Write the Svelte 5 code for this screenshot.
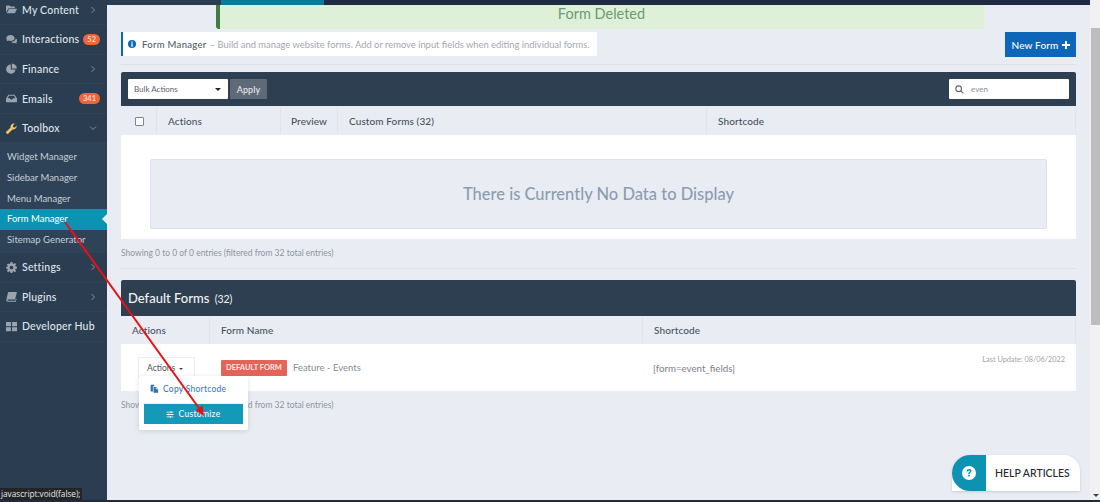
<script lang="ts">
  const topItems = [
    { label: 'My Content', icon: 'folder', arrow: 'right' },
    { label: 'Interactions', icon: 'comments', badge: '52' },
    { label: 'Finance', icon: 'pie', arrow: 'right' },
    { label: 'Emails', icon: 'inbox', badge: '341' },
    { label: 'Toolbox', icon: 'wrench', arrow: 'down' }
  ]
  const subItems = ['Widget Manager', 'Sidebar Manager', 'Menu Manager', 'Form Manager', 'Sitemap Generator']
  const bottomItems = [
    { label: 'Settings', icon: 'cog', arrow: 'right' },
    { label: 'Plugins', icon: 'book', arrow: 'right' },
    { label: 'Developer Hub', icon: 'grid' }
  ]
</script>

{#snippet navIcon(name)}
  <svg class="nav-icon" class:yellow={name === 'wrench'} viewBox="0 0 16 16" aria-hidden="true">
    {#if name === 'folder'}
      <path d="M0 3.5C0 2.7.6 2 1.4 2h3.8l1.5 1.6h5c.8 0 1.3.6 1.3 1.3V6H4L0 12z" />
      <path d="M4.5 7H16l-3 6.5H1z" />
    {:else if name === 'comments'}
      <path d="M6.5 1.5C3 1.5.4 3.5.4 6c0 1.100.5 2 1.300 2.800-.3.8-.9 1.500-1.200 1.900 1.200-.1 2.300-.6 3-1.100.9.300 1.900.5 3 .5 3.400 0 6-2 6-4.100s-2.600-4.500-6-4.500z" />
      <path d="M14 6.500c.1 2.900-2.800 5-6.500 5.100.9 1 2.500 1.600 4.200 1.600.6 0 1.200-.1 1.700-.2.700.5 1.600.8 2.400.9-.3-.4-.7-1-.9-1.600 1-.8 1.500-1.700 1.500-2.800 0-1.200-1-2.300-2.400-3z" />
    {:else if name === 'pie'}
      <path d="M7 2.200a6.800 6.800 0 1 0 6.800 7.400H7z" />
      <path d="M8.500 .8v7.300h7.300A7.400 7.400 0 0 0 8.500 .8z" />
    {:else if name === 'inbox'}
      <path fill-rule="evenodd" d="M3.500 2.500h9L16 8v4.200c0 .8-.6 1.300-1.300 1.300H1.300C.6 13.500 0 13 0 12.200V8zM4.500 4 2.300 7.600h3.500l1 1.800h2.400l1-1.800h3.500L11.500 4z" />
    {:else if name === 'wrench'}
      <path d="M15.700 3.700 13 6.400l-2.400-.4-.5-2.400L12.800.9c-1.700-.6-3.600-.2-4.900 1.100-1.200 1.200-1.600 2.900-1.200 4.500L.7 12.500c-.9.900-.9 2 0 2.800.8.900 2 .9 2.800 0l6-6c1.600.4 3.300 0 4.500-1.200 1.300-1.300 1.700-3.200 1.700-4.400z" />
    {:else if name === 'cog'}
      <path fill-rule="evenodd" d="M6.700 0h2.600l.4 2.200 1.300.6L12.900 1.500l1.800 1.800-1.300 1.900.6 1.300 2 .4v2.600l-2 .4-.6 1.300 1.300 1.900-1.800 1.800-1.900-1.300-1.300.6-.4 2.200H6.700l-.4-2.200-1.300-.6-1.900 1.300-1.800-1.800 1.300-1.900-.6-1.300-2-.4V7.400l2-.4.6-1.300-1.300-1.900 1.800-1.800L5 2.800l1.300-.6zM8 5.300a2.700 2.700 0 1 0 0 5.400 2.700 2.700 0 0 0 0-5.400z" />
    {:else if name === 'book'}
      <path d="M4 1.500h11c.5 0 .8.400.7.900l-2.300 9c-.1.500-.5.800-1 .8H3.200c-.9 0-1.200.5-1.100 1 .1.400.5.800 1.100.8h10.300l.8-3.200 1 .4-1 4.300H3C1.300 15.500.2 14.200.5 12.600L2.800 2.400c.1-.5.600-.9 1.200-.9z" />
    {:else if name === 'grid'}
      <path d="M0 1.500h7.200v6H0zM8.800 1.500H16v6H8.800zM0 9h7.200v6H0zM8.800 9H16v6H8.800z" />
    {/if}
  </svg>
{/snippet}

{#snippet navRow(item)}
  <li class="nav-item">
    {@render navIcon(item.icon)}
    <span class="nav-label">{item.label}</span>
    {#if item.badge}
      <span class="badge">{item.badge}</span>
    {:else if item.arrow === 'right'}
      <svg class="chevron" viewBox="0 0 8 8"><path d="M2.500 1 5.500 4 2.500 7" /></svg>
    {:else if item.arrow === 'down'}
      <svg class="chevron" viewBox="0 0 8 8"><path d="M1 2.500 4 5.500 7 2.500" /></svg>
    {/if}
  </li>
{/snippet}

<div class="page">
  <aside class="sidebar">
    <ul class="nav">
      {#each topItems as item}
        {@render navRow(item)}
      {/each}
    </ul>
    <ul class="subnav">
      {#each subItems as sub}
        <li class:active={sub === 'Form Manager'}>{sub}</li>
      {/each}
    </ul>
    <ul class="nav">
      {#each bottomItems as item}
        {@render navRow(item)}
      {/each}
    </ul>
  </aside>

  <main class="main">
    <div class="topbar">
      <div class="topbar-a"></div>
      <div class="topbar-b"></div>
      <div class="topbar-c"></div>
    </div>

    <div class="flash">Form Deleted</div>

    <div class="page-head">
      <div class="notice">
        <svg class="info" viewBox="0 0 16 16">
          <circle cx="8" cy="8" r="8" fill="#0d66b8" />
          <rect x="6.800" y="3" width="2.600" height="2.600" fill="#fff" />
          <path d="M5.800 6.800h3.600v5h1.200v1.400H5.800v-1.400h1v-3.600h-1z" fill="#fff" />
        </svg>
        <strong>Form Manager</strong>
        <span>– Build and manage website forms. Add or remove input fields when editing individual forms.</span>
      </div>
      <button class="new-form">New Form
        <svg viewBox="0 0 10 10"><path d="M3.800 0h2.400v3.800H10v2.400H6.200V10H3.800V6.200H0V3.800h3.800z" /></svg>
      </button>
    </div>

    <section class="card">
      <div class="toolbar">
        <div class="select">Bulk Actions <i class="caret"></i></div>
        <button class="apply">Apply</button>
        <div class="search">
          <svg viewBox="0 0 16 16"><circle cx="6.500" cy="6.500" r="5" /><path d="M10.300 10.300 15 15" /></svg>
          <span>even</span>
        </div>
      </div>
      <div class="thead custom-cols">
        <div class="th check"><span class="checkbox"></span></div>
        <div class="th">Actions</div>
        <div class="th preview">Preview</div>
        <div class="th">Custom Forms (32)</div>
        <div class="th">Shortcode</div>
      </div>
      <div class="empty-wrap">
        <div class="empty">There is Currently No Data to Display</div>
      </div>
    </section>
    <p class="showing">Showing 0 to 0 of 0 entries (filtered from 32 total entries)</p>

    <hr class="rule" />

    <section class="card defaults">
      <h2 class="card-title">Default Forms <small>(32)</small></h2>
      <div class="thead default-cols">
        <div class="th">Actions</div>
        <div class="th">Form Name</div>
        <div class="th">Shortcode</div>
      </div>
      <div class="row default-cols">
        <div class="td-actions">
          <div class="actions-btn">Actions <i class="caret small"></i></div>
          <div class="menu">
            <a class="copy" href="#copy">
              <svg viewBox="0 0 14 14">
                <path d="M1 1h5.500v2.500H4.500v8H1z" />
                <path d="M5.500 4.500H9V8h3.500v5.500h-7z" />
                <path d="M10 4.500 12.500 7H10z" />
              </svg>
              Copy Shortcode
            </a>
            <button class="customize">
              <svg viewBox="0 0 14 12">
                <path d="M1 1.200h12v1.400H1zM1 5.300h12v1.400H1zM1 9.400h12v1.400H1z" />
                <path d="M8 .4h1.800v3H8zM3.500 4.500h1.800v3H3.500zM6.500 8.600h1.800v3H6.500z" />
              </svg>
              Customize
            </button>
          </div>
        </div>
        <div class="td-name">
          <span class="tag">DEFAULT FORM</span>
          <span class="form-name">Feature - Events</span>
        </div>
        <div class="td-code">
          <span>[form=event_fields]</span>
          <span class="updated">Last Update: 08/06/2022</span>
        </div>
      </div>
    </section>
    <p class="showing second">Showing 1 to 1 of 1 entries (filtered from 32 total entries)</p>

    <div class="help">
      <div class="help-icon">
        <svg viewBox="0 0 16 16">
          <circle cx="8" cy="8" r="8" fill="#fff" />
          <path d="M5.300 6.200C5.400 4.500 6.600 3.500 8.200 3.500c1.500 0 2.700 1 2.700 2.300 0 1.900-2.100 1.900-2.100 3.300H7c0-2.300 2-2.200 2-3.200 0-.5-.4-.8-.9-.8-.6 0-1 .4-1.100 1.100z" fill="#0c93b1" />
          <rect x="7" y="10" width="1.900" height="1.900" fill="#0c93b1" />
        </svg>
      </div>
      <div class="help-text">HELP ARTICLES</div>
    </div>
  </main>

  <div class="scrollbar">
    <div class="thumb"></div>
    <i class="scroll-down"></i>
  </div>

  <div class="statusbar">javascript:void(false);</div>
  <div class="bottom-line"></div>

  <svg class="arrow" viewBox="0 0 1100 502" aria-hidden="true">
    <line x1="65" y1="222" x2="201" y2="411" stroke="#ea1018" stroke-width="2" />
    <path d="M204 416 195.500 410.500 202.500 405.500z" fill="#ea1018" />
  </svg>
</div>

<style>
  :global(body) {
    margin: 0;
    font-family: "Lato", "Noto Sans", sans-serif;
  }

  .page {
    position: relative;
    display: flex;
    width: 1100px;
    height: 502px;
    overflow: hidden;
    background: #e9edf3;
    color: #3c4858;
  }

  ul {
    list-style: none;
    margin: 0;
    padding: 0;
  }

  /* sidebar */
  .sidebar {
    flex: 0 0 107px;
    width: 107px;
    background: #2b3d50;
  }

  .sidebar > .nav:first-child {
    margin-top: -4.500px;
  }

  .nav-item {
    display: flex;
    align-items: center;
    height: 29.6px;
    box-sizing: border-box;
    padding: 0 8px 0 6px;
    border-bottom: 1px solid #2f4256;
    color: #dfe5ea;
    font-size: 10.500px;
    font-weight: 500;
    letter-spacing: 0.2px;
  }

  .nav-icon {
    width: 11px;
    height: 11px;
    margin-right: 5px;
    flex: none;
    fill: #99a4b0;
  }

  .nav-icon.yellow {
    fill: #eec46c;
  }

  .nav-label {
    flex: 1;
    white-space: nowrap;
  }

  .badge {
    padding: 0 4px;
    height: 11px;
    line-height: 11px;
    border-radius: 6px;
    background: #f0643c;
    color: #f7d6c8;
    font-size: 7.500px;
    font-weight: 700;
    letter-spacing: 0;
    margin-right: -1px;
  }

  .chevron {
    width: 8px;
    height: 8px;
    margin-right: 2px;
    fill: none;
    stroke: #7f8d9c;
    stroke-width: 1;
  }

  .subnav {
    background: #2f4358;
    padding: 3.500px 0 2px;
  }

  .subnav li {
    position: relative;
    height: 20.800px;
    line-height: 20.800px;
    padding-left: 7px;
    font-size: 9.500px;
    color: #c6ced6;
    white-space: nowrap;
  }

  .subnav li.active {
    background: #0c93b1;
    color: #fff;
  }

  .subnav li.active::after {
    content: '';
    position: absolute;
    right: 0;
    top: 5px;
    border: 5px solid transparent;
    border-left-width: 0;
    border-right-color: #e9edf3;
  }

  /* main column */
  .main {
    position: relative;
    flex: 1;
    min-width: 0;
    padding: 0 14px;
  }

  .topbar {
    display: flex;
    height: 5px;
    margin: 0 -14px;
  }

  .topbar-a {
    width: 114px;
    background: #2b3d50;
  }

  .topbar-b {
    width: 103px;
    background: #087c9a;
  }

  .topbar-c {
    flex: 1;
    background: #1e2b42;
  }

  .flash {
    box-sizing: border-box;
    width: 768px;
    height: 24px;
    margin: 0 auto;
    transform: translateX(1px);
    background: #dff0d8;
    border-left: 4px solid #3f7d43;
    border-radius: 0 0 0 3px;
    color: #6c9a74;
    font-size: 14.500px;
    line-height: 18px;
    text-align: center;
  }

  .page-head {
    display: flex;
    justify-content: space-between;
    align-items: flex-start;
    margin-top: 3px;
    padding-bottom: 7px;
    border-bottom: 1px solid #dde2e9;
    margin-bottom: 7px;
  }

  .notice {
    display: flex;
    align-items: center;
    gap: 3px;
    width: 476px;
    height: 24px;
    box-sizing: border-box;
    padding-left: 5px;
    background: #fff;
    border-left: 2px solid #0d66b8;
    font-size: 9.400px;
    white-space: nowrap;
    color: #a3a8af;
  }

  .notice strong {
    color: #525c68;
    font-size: 9.500px;
    font-weight: 500;
    margin-left: 3px;
    letter-spacing: 0.3px;
  }

  .info {
    width: 8px;
    height: 8px;
  }

  .new-form {
    display: flex;
    align-items: center;
    justify-content: center;
    gap: 3px;
    width: 71px;
    height: 25px;
    border: none;
    padding: 0;
    background: #0d66b8;
    color: #fff;
    font: inherit;
    font-size: 10px;
    font-weight: 500;
    letter-spacing: 0.15px;
  }

  .new-form svg {
    width: 8px;
    height: 8px;
    fill: #fff;
  }

  /* cards */
  .card-title,
  .toolbar {
    background: #2e3f51;
    border-radius: 2px 2px 0 0;
  }

  .toolbar {
    display: flex;
    align-items: center;
    gap: 2px;
    height: 34px;
    box-sizing: border-box;
    padding: 0 7px;
  }

  .select {
    display: flex;
    justify-content: space-between;
    align-items: center;
    box-sizing: border-box;
    width: 100px;
    height: 20px;
    padding: 0 7px 0 6px;
    background: #fff;
    border-radius: 1px;
    font-size: 8px;
    color: #59616b;
  }

  .caret {
    display: inline-block;
    border: 3px solid transparent;
    border-top: 3px solid #222;
    border-bottom-width: 0;
    margin-left: 2px;
    vertical-align: middle;
  }

  .caret.small {
    border-width: 2.500px 2.500px 0;
    border-top-color: #444;
  }

  .apply {
    width: 37px;
    height: 20px;
    padding: 0;
    border: none;
    border-radius: 1px;
    background: #5e6a78;
    color: #e6e9ec;
    font: inherit;
    font-size: 9px;
    font-weight: 500;
    letter-spacing: 0.1px;
  }

  .search {
    display: flex;
    align-items: center;
    gap: 7px;
    box-sizing: border-box;
    width: 120px;
    height: 20px;
    margin-left: auto;
    padding-left: 6px;
    background: #fff;
    border-radius: 1px;
    font-size: 8px;
    color: #8d929a;
  }

  .search svg {
    width: 9px;
    height: 9px;
    fill: none;
    stroke: #666;
    stroke-width: 2;
  }

  .thead {
    display: grid;
    height: 28px;
    margin-top: 1px;
    border-right: 1px solid #e1e5eb;
    border-bottom: 1px solid #e9edf3;
    box-sizing: border-box;
  }

  .thead.default-cols {
    height: 27px;
  }

  .custom-cols {
    grid-template-columns: 35px 124px 57px 369px 1fr;
  }

  .default-cols {
    grid-template-columns: 88px 433px 1fr;
  }

  .th {
    display: flex;
    align-items: center;
    padding-left: 11px;
    border-left: 1px solid #e1e5eb;
    font-size: 10px;
    font-weight: 500;
    letter-spacing: 0.1px;
    color: #47525f;
  }

  .th:first-child {
    border-left: none;
  }

  .th.preview {
    padding-left: 10px;
  }

  .th.check {
    padding-left: 14px;
    padding-top: 1px;
  }

  .checkbox {
    width: 7px;
    height: 7px;
    border: 1px solid #80868e;
    border-radius: 1px;
    background: #fff;
  }

  .empty-wrap {
    height: 104px;
    box-sizing: border-box;
    padding: 24px 29px 10px;
    background: #fff;
  }

  .empty {
    display: flex;
    align-items: center;
    justify-content: center;
    height: 70px;
    box-sizing: border-box;
    background: #e9edf3;
    border: 1px solid #dde2ea;
    border-radius: 2px;
    color: #8c9cb1;
    font-size: 16.500px;
    font-weight: 500;
  }

  .showing {
    margin: 9px 0 0;
    font-size: 8.500px;
    line-height: 10px;
    color: #8e959d;
  }

  .rule {
    height: 1px;
    margin: 10px 0 11px;
    border: none;
    background: #dde2e9;
  }

  .card-title {
    margin: 0;
    height: 36px;
    padding-left: 7px;
    line-height: 36px;
    color: #f1f3f5;
    font-size: 13px;
    font-weight: 500;
  }

  .card-title small {
    margin-left: 2px;
    font-size: 10.500px;
    font-weight: 400;
  }

  .row {
    display: grid;
    height: 47px;
    background: #fff;
  }

  .td-actions {
    position: relative;
    padding: 13px 0 0 17px;
  }

  .actions-btn {
    box-sizing: border-box;
    width: 57px;
    height: 21px;
    line-height: 20px;
    padding-left: 8px;
    border: 1px solid #eceef1;
    font-size: 8.500px;
    color: #4c545e;
  }

  .menu {
    position: absolute;
    z-index: 2;
    top: 32px;
    left: 18px;
    box-sizing: border-box;
    width: 109px;
    height: 54px;
    padding: 5px 5px 0;
    background: #fff;
    border-radius: 2px;
    box-shadow: 0 1px 5px rgba(60, 70, 90, 0.18);
  }

  .copy {
    display: flex;
    align-items: center;
    gap: 4px;
    height: 15px;
    padding-left: 6px;
    padding-bottom: 7px;
    border-bottom: 1px solid #eef0f3;
    font-size: 8.500px;
    font-weight: 500;
    letter-spacing: 0.25px;
    color: #3f7cc0;
    text-decoration: none;
  }

  .copy svg {
    width: 9px;
    height: 9px;
    fill: #2f6fb8;
  }

  .customize {
    display: flex;
    align-items: center;
    justify-content: center;
    gap: 4px;
    width: 99px;
    height: 20px;
    padding: 0;
    border: none;
    background: #129ab8;
    color: #f2fbfd;
    font: inherit;
    font-size: 8.500px;
    font-weight: 500;
    letter-spacing: 0.3px;
  }

  .customize svg {
    width: 8px;
    height: 7px;
    fill: #f2fbfd;
  }

  .td-name {
    display: flex;
    align-items: center;
    gap: 6px;
    padding-left: 12px;
  }

  .tag {
    height: 16px;
    line-height: 16px;
    padding: 0 5px;
    background: #e5645a;
    border-radius: 1px;
    color: #fbe6e3;
    font-size: 7.500px;
    font-weight: 700;
  }

  .form-name {
    font-size: 9.500px;
    color: #8a8d91;
  }

  .td-code {
    position: relative;
    display: flex;
    align-items: center;
    justify-content: space-between;
    padding: 0 11px;
    font-size: 9.700px;
    color: #7d8188;
  }

  .updated {
    align-self: flex-start;
    margin-top: 11px;
    font-size: 7.300px;
    color: #a0a4a9;
  }

  /* floating help */
  .help {
    position: absolute;
    right: 10px;
    bottom: 11px;
    display: flex;
    width: 128px;
    height: 36px;
    border-radius: 18px 16px 0 0;
    background: #fff;
    box-shadow: 0 1px 3px rgba(60, 70, 90, 0.2);
  }

  .help-icon {
    display: flex;
    align-items: center;
    justify-content: center;
    width: 34px;
    background: #0c93b1;
    border-radius: 18px 0 0 18px;
  }

  .help-icon svg {
    width: 14px;
    height: 14px;
  }

  .help-text {
    flex: 1;
    padding-left: 9px;
    line-height: 36px;
    font-size: 10.500px;
    font-weight: 500;
    color: #26292e;
    white-space: nowrap;
  }

  /* browser chrome bits */
  .scrollbar {
    position: relative;
    flex: 0 0 10px;
    background: #f1f1f1;
  }

  .thumb {
    position: absolute;
    top: 28px;
    left: 1px;
    right: 0;
    height: 297px;
    background: #bdbdbd;
  }

  .scroll-down {
    position: absolute;
    right: 1px;
    bottom: 5px;
    border: 3px solid transparent;
    border-top-color: #444;
    border-bottom-width: 0;
  }

  .statusbar {
    position: absolute;
    left: 0;
    bottom: 2px;
    height: 12px;
    padding: 0 1px;
    background: #232426;
    color: #e9e9e9;
    font-family: "Open Sans", sans-serif;
    font-size: 8.200px;
    line-height: 12px;
  }

  .bottom-line {
    position: absolute;
    left: 0;
    right: 0;
    bottom: 0;
    height: 2px;
    background: #1e2b42;
  }

  .arrow {
    position: absolute;
    inset: 0;
    z-index: 5;
    width: 1100px;
    height: 502px;
    pointer-events: none;
  }
</style>
